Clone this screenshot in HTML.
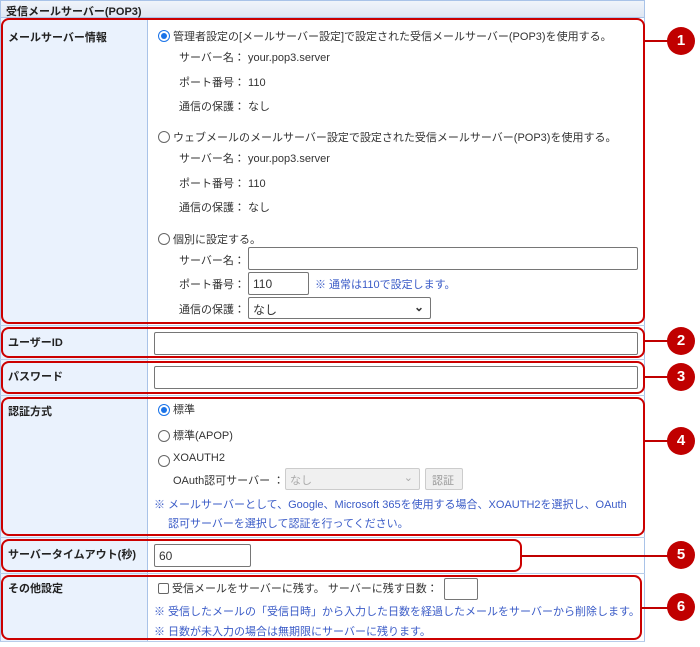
<!DOCTYPE html>
<html><head><meta charset="utf-8"><style>
*{margin:0;padding:0;box-sizing:border-box}
body{width:700px;height:647px;background:#fff;position:relative;font-family:"Liberation Sans","Noto Sans CJK JP",sans-serif;font-size:11px;color:#333;overflow:hidden}
.a{position:absolute;white-space:nowrap}
.lab{font-weight:bold;color:#222}
.blue{color:#3a5bc7}
.inp{position:absolute;border:1px solid #767676;border-radius:2px;background:#fff;height:23px}
.rad{position:absolute;width:12px;height:12px;border:1px solid #666;border-radius:50%;background:#fff}
.rad.on{border:1px solid #1a73e8}
.rad.on::after{content:"";position:absolute;left:2px;top:2px;width:6px;height:6px;border-radius:50%;background:#1a73e8}
.box{position:absolute;border:2px solid #cc0000;border-radius:8px}
.c{position:absolute;width:28px;height:28px;border-radius:50%;background:#c00000;color:#fff;font-size:15px;text-align:center;line-height:28px;font-weight:bold}
.ln{position:absolute;height:2px;background:#c00000}
.hl{position:absolute;left:0;width:645px;height:1px;background:#b8cdea}
</style></head><body>
<div class="a" style="left:0;top:0;width:645px;height:18px;background:linear-gradient(#f0f4fa,#dfe7f3);border:1px solid #a9c3e8"></div>
<div class="a lab" style="left:6px;top:3px;font-weight:bold">受信メールサーバー(POP3)</div>
<div class="a" style="left:0;top:18px;width:148px;height:623px;background:#eaf2fd;border-right:1px solid #a9c3e8;border-left:1px solid #a9c3e8"></div>
<div class="a" style="left:644px;top:18px;width:1px;height:623px;background:#a9c3e8"></div>
<div class="hl" style="top:325px"></div><div class="hl" style="top:359px"></div><div class="hl" style="top:395px"></div><div class="hl" style="top:537px"></div><div class="hl" style="top:573px"></div><div class="hl" style="top:641px"></div>

<div class="a lab" style="left:8px;top:29px">メールサーバー情報</div>
<div class="rad on" style="left:158px;top:30px"></div>
<div class="a" style="left:173px;top:28px">管理者設定の[メールサーバー設定]で設定された受信メールサーバー(POP3)を使用する。</div>
<div class="a" style="left:179px;top:49px">サーバー名：&nbsp;your.pop3.server</div>
<div class="a" style="left:179px;top:74px">ポート番号：&nbsp;110</div>
<div class="a" style="left:179px;top:98px">通信の保護：&nbsp;なし</div>
<div class="rad" style="left:158px;top:131px"></div>
<div class="a" style="left:173px;top:129px">ウェブメールのメールサーバー設定で設定された受信メールサーバー(POP3)を使用する。</div>
<div class="a" style="left:179px;top:150px">サーバー名：&nbsp;your.pop3.server</div>
<div class="a" style="left:179px;top:175px">ポート番号：&nbsp;110</div>
<div class="a" style="left:179px;top:199px">通信の保護：&nbsp;なし</div>
<div class="rad" style="left:158px;top:233px"></div>
<div class="a" style="left:173px;top:231px">個別に設定する。</div>
<div class="a" style="left:179px;top:252px">サーバー名：</div>
<div class="inp" style="left:248px;top:247px;width:390px"></div>
<div class="a" style="left:179px;top:276px">ポート番号：</div>
<div class="inp" style="left:248px;top:272px;width:61px;padding:4px 4px;font-size:12px">110</div>
<div class="a blue" style="left:315px;top:276px">※ 通常は110で設定します。</div>
<div class="a" style="left:179px;top:301px">通信の保護：</div>
<div class="inp" style="left:248px;top:297px;width:183px;height:22px;padding:3px 4px;font-size:12px">なし<span style="position:absolute;right:6px;top:2px;font-weight:bold">⌄</span></div>

<div class="a lab" style="left:8px;top:334px">ユーザーID</div>
<div class="inp" style="left:154px;top:332px;width:484px"></div>
<div class="a lab" style="left:8px;top:368px">パスワード</div>
<div class="inp" style="left:154px;top:366px;width:484px"></div>

<div class="a lab" style="left:8px;top:403px">認証方式</div>
<div class="rad on" style="left:158px;top:404px"></div><div class="a" style="left:173px;top:401px">標準</div>
<div class="rad" style="left:158px;top:430px"></div><div class="a" style="left:173px;top:427px">標準(APOP)</div>
<div class="rad" style="left:158px;top:455px"></div><div class="a" style="left:173px;top:452px">XOAUTH2</div>
<div class="a" style="left:173px;top:472px">OAuth認可サーバー ：</div>
<div class="inp" style="left:285px;top:468px;width:135px;height:22px;background:#f0f0f0;border-color:#ccc;color:#aaa;padding:3px 4px">なし<span style="position:absolute;right:6px;top:2px">⌄</span></div>
<div class="inp" style="left:425px;top:468px;width:38px;height:22px;background:#efefef;border-color:#ccc;color:#999;padding:3px 6px">認証</div>
<div class="a blue" style="left:154px;top:496px">※ メールサーバーとして、Google、Microsoft 365を使用する場合、XOAUTH2を選択し、OAuth</div>
<div class="a blue" style="left:168px;top:515px">認可サーバーを選択して認証を行ってください。</div>

<div class="a lab" style="left:8px;top:546px">サーバータイムアウト(秒)</div>
<div class="inp" style="left:154px;top:544px;width:97px;padding:4px;font-size:12px">60</div>

<div class="a lab" style="left:8px;top:580px">その他設定</div>
<div class="a" style="left:158px;top:583px;width:11px;height:11px;border:1px solid #666;border-radius:2px"></div>
<div class="a" style="left:172px;top:580px">受信メールをサーバーに残す。 サーバーに残す日数：</div>
<div class="inp" style="left:444px;top:578px;width:34px;height:22px"></div>
<div class="a blue" style="left:154px;top:603px">※ 受信したメールの「受信日時」から入力した日数を経過したメールをサーバーから削除します。</div>
<div class="a blue" style="left:154px;top:623px">※ 日数が未入力の場合は無期限にサーバーに残ります。</div>

<div class="box" style="left:1px;top:18px;width:644px;height:306px"></div>
<div class="box" style="left:1px;top:327px;width:644px;height:31px"></div>
<div class="box" style="left:1px;top:361px;width:644px;height:33px"></div>
<div class="box" style="left:1px;top:397px;width:644px;height:139px"></div>
<div class="box" style="left:1px;top:539px;width:521px;height:33px"></div>
<div class="box" style="left:1px;top:575px;width:641px;height:65px"></div>

<div class="ln" style="left:644px;top:40px;width:30px"></div><div class="c" style="left:667px;top:27px">1</div>
<div class="ln" style="left:644px;top:340px;width:30px"></div><div class="c" style="left:667px;top:327px">2</div>
<div class="ln" style="left:644px;top:376px;width:30px"></div><div class="c" style="left:667px;top:363px">3</div>
<div class="ln" style="left:644px;top:440px;width:30px"></div><div class="c" style="left:667px;top:427px">4</div>
<div class="ln" style="left:521px;top:555px;width:150px"></div><div class="c" style="left:667px;top:541px">5</div>
<div class="ln" style="left:641px;top:607px;width:30px"></div><div class="c" style="left:667px;top:593px">6</div>
</body></html>
